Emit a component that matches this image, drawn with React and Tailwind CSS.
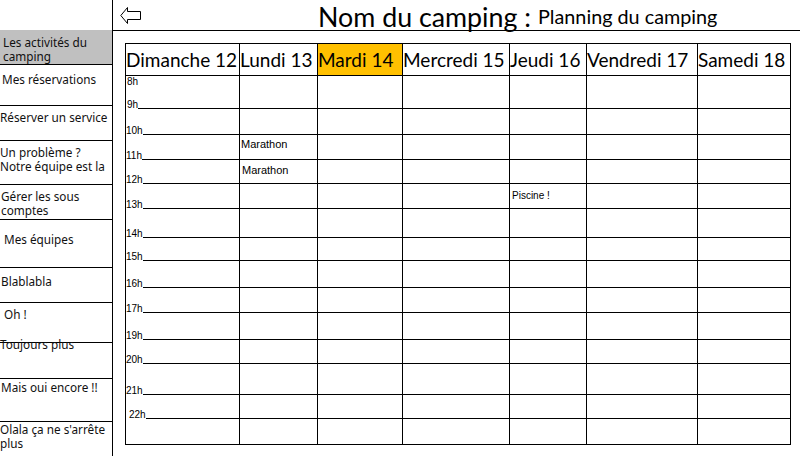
import React from "react";

const sideItems = [
  { lines: ["Les activités du", "camping"], box: "h-[35px] bg-[#c0c0c0]", txt: "pt-[5px] pl-[3px]" },
  { lines: ["Mes réservations"], box: "h-[41px]", txt: "pt-[7px] pl-[2px]" },
  { lines: ["Réserver un service"], box: "h-[35px]", txt: "pt-[4px] pl-0" },
  { lines: ["Un problème ?", "Notre équipe est la"], box: "h-[44px]", txt: "pt-[4px] pl-0" },
  { lines: ["Gérer les sous", "comptes"], box: "h-[35px]", txt: "pt-[4px] pl-[1px]" },
  { lines: ["Mes équipes"], box: "h-[48px]", txt: "pt-[12px] pl-[4px]" },
  { lines: ["Blablabla"], box: "h-[35px]", txt: "pt-[6px] pl-[1px]" },
  { lines: ["Oh !"], box: "h-[40px]", txt: "pt-[4px] pl-[4px]" },
  { lines: ["Toujours plus"], box: "h-[36px]", txt: "-mt-[6px] pl-0" },
  { lines: ["Mais oui encore !!"], box: "h-[43px]", txt: "pt-[1px] pl-[1px]" },
  { lines: ["Olala ça ne s'arrête", "plus"], box: "flex-1 border-b-0", txt: "pt-0 pl-0" },
];

const days = [
  { label: "Dimanche 12", w: "w-[114px] border-r" },
  { label: "Lundi 13", w: "w-[78px] border-r" },
  { label: "Mardi 14", w: "w-[85px] border-r bg-[#ffc000]" },
  { label: "Mercredi 15", w: "w-[107px] border-r" },
  { label: "Jeudi 16", w: "w-[77px] border-r" },
  { label: "Vendredi 17", w: "w-[111px] border-r" },
  { label: "Samedi 18", w: "w-[92px]" },
];

const colW = [
  "w-[78px] border-r",
  "w-[85px] border-r",
  "w-[107px] border-r",
  "w-[77px] border-r",
  "w-[111px] border-r",
  "w-[92px]",
];

const rows = [
  { h: "8h", cls: "h-[32px]", first: true, lab: "pl-[1px]" },
  { h: "9h", cls: "h-[26px]", lab: "pl-[1px]" },
  { h: "10h", cls: "h-[25px]", lab: "pl-0", ev: { 0: ["Marathon", "pt-[3px] pl-[1px] text-[11px]"] } },
  { h: "11h", cls: "h-[24px]", lab: "pl-0", ev: { 0: ["Marathon", "pt-[4px] pl-[2px] text-[11px]"] } },
  { h: "12h", cls: "h-[25px]", lab: "pl-0", ev: { 3: ["Piscine !", "pt-[6px] pl-[2px] text-[10px]"] } },
  { h: "13h", cls: "h-[29px]", lab: "pl-0" },
  { h: "14h", cls: "h-[23px]", lab: "pl-0" },
  { h: "15h", cls: "h-[27px]", lab: "pl-0" },
  { h: "16h", cls: "h-[25px]", lab: "pl-0" },
  { h: "17h", cls: "h-[27px]", lab: "pl-0" },
  { h: "19h", cls: "h-[24px]", lab: "pl-0" },
  { h: "20h", cls: "h-[31px]", lab: "pl-0" },
  { h: "21h", cls: "h-[24px]", lab: "pl-0" },
  { h: "22h", cls: "h-[26px]", lab: "pl-[3px]" },
];

function Arrow() {
  return (
    <svg width="22" height="18" viewBox="0 0 22 18" className="block">
      <polygon
        points="0.8,8.5 7.5,0.5 7.5,4.5 20.5,4.5 20.5,12.5 7.5,12.5 7.5,16.5"
        fill="white"
        stroke="black"
        strokeWidth="1"
        strokeLinejoin="miter"
      />
    </svg>
  );
}

export default function App() {
  const sans = { fontFamily: '"Noto Sans", "Liberation Sans", sans-serif' };
  return (
    <div className="w-[800px] h-[456px] flex bg-white text-black overflow-hidden">
      {/* Sidebar */}
      <aside
        className="w-[113px] shrink-0 border-r border-black flex flex-col text-[11.75px] leading-[14px] text-[#111]"
        style={sans}
      >
        <div className="h-[30px] shrink-0" />
        {sideItems.map((it, i) => (
          <div key={i} className={`shrink-0 border-b border-black ${it.box}`}>
            <div className={it.txt}>
              {it.lines.map((l, j) => (
                <div key={j} className="whitespace-nowrap">{l}</div>
              ))}
            </div>
          </div>
        ))}
      </aside>

      {/* Main */}
      <main className="flex-1 flex flex-col" style={{ fontFamily: 'Lato, "Liberation Sans", sans-serif' }}>
        <header className="h-[31px] shrink-0 border-b border-black flex items-end">
          <div className="self-start mt-[7px] ml-[7px]">
            <Arrow />
          </div>
          <span className="ml-[176px] text-[26.8px] leading-[26px] whitespace-nowrap">Nom du camping :</span>
          <span className="ml-[7px] mb-[4px] text-[19.8px] leading-[20px] whitespace-nowrap">Planning du camping</span>
        </header>

        <div className="pl-[12px] pt-[12px]">
          <div className="w-[666px] h-[402px] border border-black flex flex-col">
            {/* day header */}
            <div className="h-[32px] shrink-0 flex border-b border-black">
              {days.map((d) => (
                <div
                  key={d.label}
                  className={`${d.w} shrink-0 border-black flex items-center pl-0 text-[19px] leading-none whitespace-nowrap overflow-hidden`}
                >
                  {d.label}
                </div>
              ))}
            </div>
            {rows.map((r) => (
              <div key={r.h} className={`${r.cls} shrink-0 flex`}>
                <div className="w-[114px] shrink-0 border-r border-black" style={{ fontFamily: '"Liberation Sans", sans-serif' }}>
                  {r.first ? (
                    <div className={`text-[10px] leading-[10px] pt-[1px] ${r.lab}`}>{r.h}</div>
                  ) : (
                    <div className="flex items-end h-[9px] -mt-[8px]">
                      <span className={`text-[10px] leading-[9px] ${r.lab}`}>{r.h}</span>
                      <div className="flex-1 border-b border-black" />
                    </div>
                  )}
                </div>
                {colW.map((c, ci) => {
                  const ev = r.ev && r.ev[ci];
                  return (
                    <div
                      key={ci}
                      className={`${c} shrink-0 border-black ${r.first ? "" : "border-t"}`}
                      style={{ fontFamily: '"Liberation Sans", sans-serif' }}
                    >
                      {ev ? <div className={`${ev[1]} leading-[12px] whitespace-nowrap`}>{ev[0]}</div> : null}
                    </div>
                  );
                })}
              </div>
            ))}
          </div>
        </div>
      </main>
    </div>
  );
}
